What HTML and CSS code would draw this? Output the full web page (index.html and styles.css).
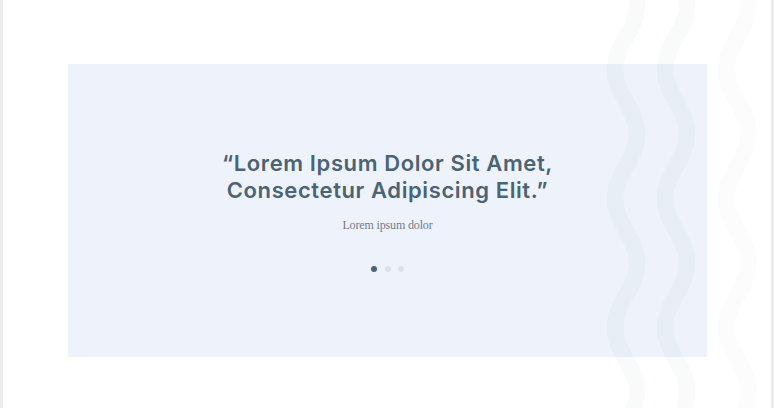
FILE: index.html
```html
<!DOCTYPE html>
<html lang="en">
<head>
<meta charset="utf-8">
<title>Testimonial</title>
<link rel="stylesheet" href="styles.css">
</head>
<body>
<div class="frame">
  <section class="page">
    <div class="testimonial">
      <blockquote class="quote">“Lorem Ipsum Dolor Sit Amet,<br>Consectetur Adipiscing Elit.”</blockquote>
      <p class="author">Lorem ipsum dolor</p>
      <div class="dots">
        <span class="dot active"></span>
        <span class="dot"></span>
        <span class="dot"></span>
      </div>
    </div>
    <svg class="waves" width="774" height="408" viewBox="0 0 774 408" aria-hidden="true">
      <defs>
        <path id="wave" d="M 615 -59.5 C 615 -33.7, 637 -20.8, 637 5 S 615 43.7, 615 69.5 S 637 108.2, 637 134 S 615 172.7, 615 198.5 S 637 237.2, 637 263 S 615 301.7, 615 327.5 S 637 366.2, 637 392 S 615 430.7, 615 456.5"/>
      </defs>
      <use href="#wave" class="w1"/>
      <use href="#wave" class="w2" transform="translate(50 0)"/>
      <use href="#wave" class="w3" transform="translate(111.5 0)"/>
    </svg>
  </section>
</div>
</body>
</html>
```

FILE: styles.css
```css
html, body {
  margin: 0;
  padding: 0;
}

body {
  width: 774px;
  height: 408px;
  overflow: hidden;
  background: #ededed;
}

.frame {
  padding: 0 3px;
  height: 408px;
  box-sizing: border-box;
}

.page {
  position: relative;
  background: #ffffff;
  height: 408px;
  padding: 64px 0 0 65px;
  box-sizing: border-box;
}

.testimonial {
  width: 639px;
  height: 293px;
  background: #eef3fb;
  display: flex;
  flex-direction: column;
  align-items: center;
  justify-content: center;
  text-align: center;
}

.quote {
  margin: 0;
  font-family: Inter, "Open Sans", sans-serif;
  font-weight: 600;
  font-size: 22px;
  line-height: 27px;
  color: #4b6374;
  letter-spacing: 0.6px;
}

.author {
  margin: 13px 0 0;
  font-family: "Liberation Serif", serif;
  font-size: 12px;
  line-height: 16px;
  letter-spacing: -0.15px;
  color: #6f7c88;
}

.dots {
  margin-top: 33px;
  display: flex;
  gap: 7.5px;
}

.dot {
  width: 6px;
  height: 6px;
  border-radius: 50%;
  background: #dde2ea;
}

.dot.active {
  background: #4b6374;
}

.waves {
  position: absolute;
  left: -3px;
  top: 0;
  pointer-events: none;
}

.waves use {
  fill: none;
  stroke-width: 16.5;
  stroke-linecap: round;
}

.waves .w1,
.waves .w2 {
  stroke: rgba(40, 60, 90, 0.028);
}

.waves .w3 {
  stroke: rgba(40, 60, 90, 0.014);
}
```
